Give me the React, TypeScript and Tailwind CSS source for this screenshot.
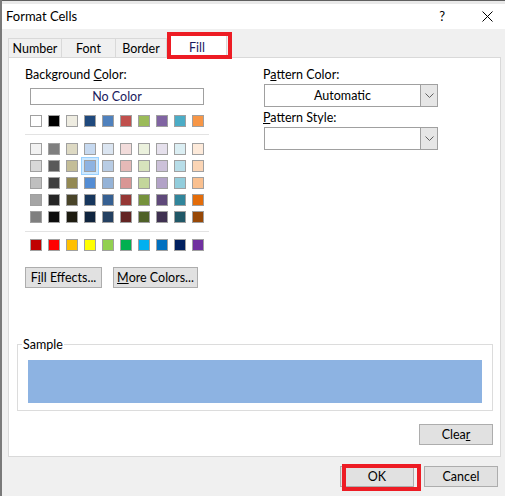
import React from "react";

const themeTop = ["#ffffff", "#000000", "#eeece1", "#1f497d", "#4f81bd", "#c0504d", "#9bbb59", "#8064a2", "#4bacc6", "#f79646"];

const themeShades = [
  ["#f2f2f2", "#7f7f7f", "#ddd9c3", "#c6d9f0", "#dbe5f1", "#f2dcdb", "#ebf1dd", "#e5e0ec", "#dbeef3", "#fdeada"],
  ["#d8d8d8", "#595959", "#c4bd97", "#8db3e2", "#b8cce4", "#e5b9b7", "#d7e3bc", "#ccc1d9", "#b7dde8", "#fbd5b5"],
  ["#bfbfbf", "#3f3f3f", "#938953", "#548dd4", "#95b3d7", "#d99694", "#c3d69b", "#b2a2c7", "#92cddc", "#fac08f"],
  ["#a5a5a5", "#262626", "#494429", "#17365d", "#366092", "#953734", "#76923c", "#5f497a", "#31859b", "#e36c09"],
  ["#7f7f7f", "#0c0c0c", "#1d1b10", "#0f243e", "#244061", "#632423", "#4f6128", "#3f3151", "#205867", "#974806"],
];

const standard = ["#c00000", "#ff0000", "#ffc000", "#ffff00", "#92d050", "#00b050", "#00b0f0", "#0070c0", "#002060", "#7030a0"];

function Swatch({ color, selected }: { color: string; selected?: boolean }) {
  return (
    <div
      className={
        selected
          ? "h-[12px] w-[12px] border border-[#a0a0a0] shadow-[0_0_0_2px_#cce8ff,0_0_0_3px_#99d1ff]"
          : "h-[12px] w-[12px] border border-[#a0a0a0]"
      }
      style={{ backgroundColor: color }}
    />
  );
}

function SwatchRow({ colors, selectedIndex }: { colors: string[]; selectedIndex?: number }) {
  return (
    <div className="flex gap-[6px]">
      {colors.map((c, i) => (
        <Swatch key={i} color={c} selected={i === selectedIndex} />
      ))}
    </div>
  );
}

function Chevron() {
  return (
    <svg width="9" height="5" viewBox="0 0 9 5" fill="none">
      <path d="M0.5 0.5 L4.5 4.5 L8.5 0.5" stroke="#606060" strokeWidth="1" />
    </svg>
  );
}

function Dropdown({ value }: { value?: string }) {
  return (
    <div className="flex h-[23px] w-[174px] border border-[#a0a0a0] bg-white">
      <div className="flex flex-1 items-center justify-center">{value}</div>
      <div className="flex w-[17px] items-center justify-center border-l border-[#a0a0a0] bg-[#e6e6e6]">
        <Chevron />
      </div>
    </div>
  );
}

function Button({ children, className }: { children: React.ReactNode; className: string }) {
  return (
    <div className={"flex h-[21px] items-center justify-center border border-[#adadad] bg-[#e1e1e1] " + className}>
      {children}
    </div>
  );
}

export default function App() {
  return (
    <div
      className="relative flex h-[496px] w-[505px] flex-col overflow-hidden border-l-2 border-[#7a7a7a] bg-[#f0f0f0] text-[12.5px] leading-[15px] text-black"
      style={{ fontFamily: '"Segoe UI", Lato, "Noto Sans", Arial, sans-serif' }}
    >
      {/* window behind */}
      <div className="h-[4px] border-t border-[#5f5f5f] bg-[#e9e9e9]" />

      {/* title bar */}
      <div className="flex h-[25px] items-center bg-white pl-[4px]">
        <span className="text-[13px]">Format Cells</span>
        <span className="ml-auto mr-[37px] text-[13px]">?</span>
        <svg width="11" height="11" viewBox="0 0 11 11" className="mr-[12px]">
          <path d="M0.5 0.5 L10.5 10.5 M10.5 0.5 L0.5 10.5" stroke="#000" strokeWidth="1" />
        </svg>
      </div>

      <div className="flex flex-1 flex-col px-[6px]">
        {/* tabs */}
        <div className="mt-[5px] flex h-[23px] items-end">
          <div className="flex h-[19px] w-[54px] items-center justify-center border border-b-0 border-[#d9d9d9]">Number</div>
          <div className="flex h-[19px] w-[54px] items-center justify-center border border-b-0 border-l-0 border-[#d9d9d9]">Font</div>
          <div className="flex h-[19px] w-[51px] items-center justify-center border border-b-0 border-l-0 border-[#d9d9d9]">Border</div>
          <div className="relative z-10 -mb-px flex h-[24px] w-[60px] items-center justify-center border border-b-0 border-[#d9d9d9] bg-white pt-[2px] text-[#1a1a5e]">
            Fill
          </div>
        </div>

        {/* tab panel */}
        <div className="flex h-[400px] w-[493px] flex-col border border-[#d9d9d9] bg-white">
          <div className="flex">
            <div className="ml-[16px] mt-[9px] flex w-[184px] flex-col">
              <span>
                Background <span className="underline">C</span>olor:
              </span>
              <div className="ml-[5px] mt-[6px] flex h-[17px] w-[174px] items-center justify-center border border-[#a0a0a0] text-[#1a1a5e]">
                No Color
              </div>
              <div className="ml-[5px] mt-[10px]">
                <SwatchRow colors={themeTop} />
              </div>
              <div className="mt-[7px] h-px w-[184px] bg-[#e3e3e3]" />
              <div className="ml-[5px] mt-[8px] flex flex-col gap-[5px]">
                {themeShades.map((row, i) => (
                  <SwatchRow key={i} colors={row} selectedIndex={i === 1 ? 3 : undefined} />
                ))}
              </div>
              <div className="mt-[8px] h-px w-[184px] bg-[#e3e3e3]" />
              <div className="ml-[5px] mt-[7px]">
                <SwatchRow colors={standard} />
              </div>
              <div className="mt-[16px] flex gap-[11px]">
                <Button className="w-[77px]">
                  F<span className="underline">i</span>ll Effects...
                </Button>
                <Button className="w-[85px]">
                  <span className="underline">M</span>ore Colors...
                </Button>
              </div>
            </div>

            <div className="ml-[54px] mt-[9px] flex flex-col">
              <span>
                P<span className="underline">a</span>ttern Color:
              </span>
              <div className="ml-px mt-[2px]">
                <Dropdown value="Automatic" />
              </div>
              <span className="mt-[3px]">
                <span className="underline">P</span>attern Style:
              </span>
              <div className="ml-px mt-[2px]">
                <Dropdown />
              </div>
            </div>
          </div>

          {/* sample */}
          <div className="relative ml-[8px] mt-[56px] flex h-[67px] w-[476px] border border-[#dcdcdc] pb-[7px] pl-[10px] pr-[10px] pt-[15px]">
            <span className="absolute left-[4px] top-[-8px] bg-white px-px">Sample</span>
            <div className="flex-1 bg-[#8db3e2]" />
          </div>

          <div className="mr-[7px] mt-[13px] flex justify-end">
            <Button className="w-[74px]">
              Clea<span className="underline">r</span>
            </Button>
          </div>
        </div>

        {/* footer */}
        <div className="mt-[9px] flex justify-end gap-[10px] pr-[1px]">
          <Button className="w-[74px]">OK</Button>
          <Button className="w-[74px]">Cancel</Button>
        </div>
      </div>

      {/* red annotation boxes */}
      <div className="pointer-events-none absolute left-[165px] top-[32px] z-20 h-[27px] w-[65px] border-[4px] border-[#ed1c24]" />
      <div className="pointer-events-none absolute left-[340px] top-[464px] z-20 h-[27px] w-[79px] border-[4px] border-[#ed1c24]" />
    </div>
  );
}
